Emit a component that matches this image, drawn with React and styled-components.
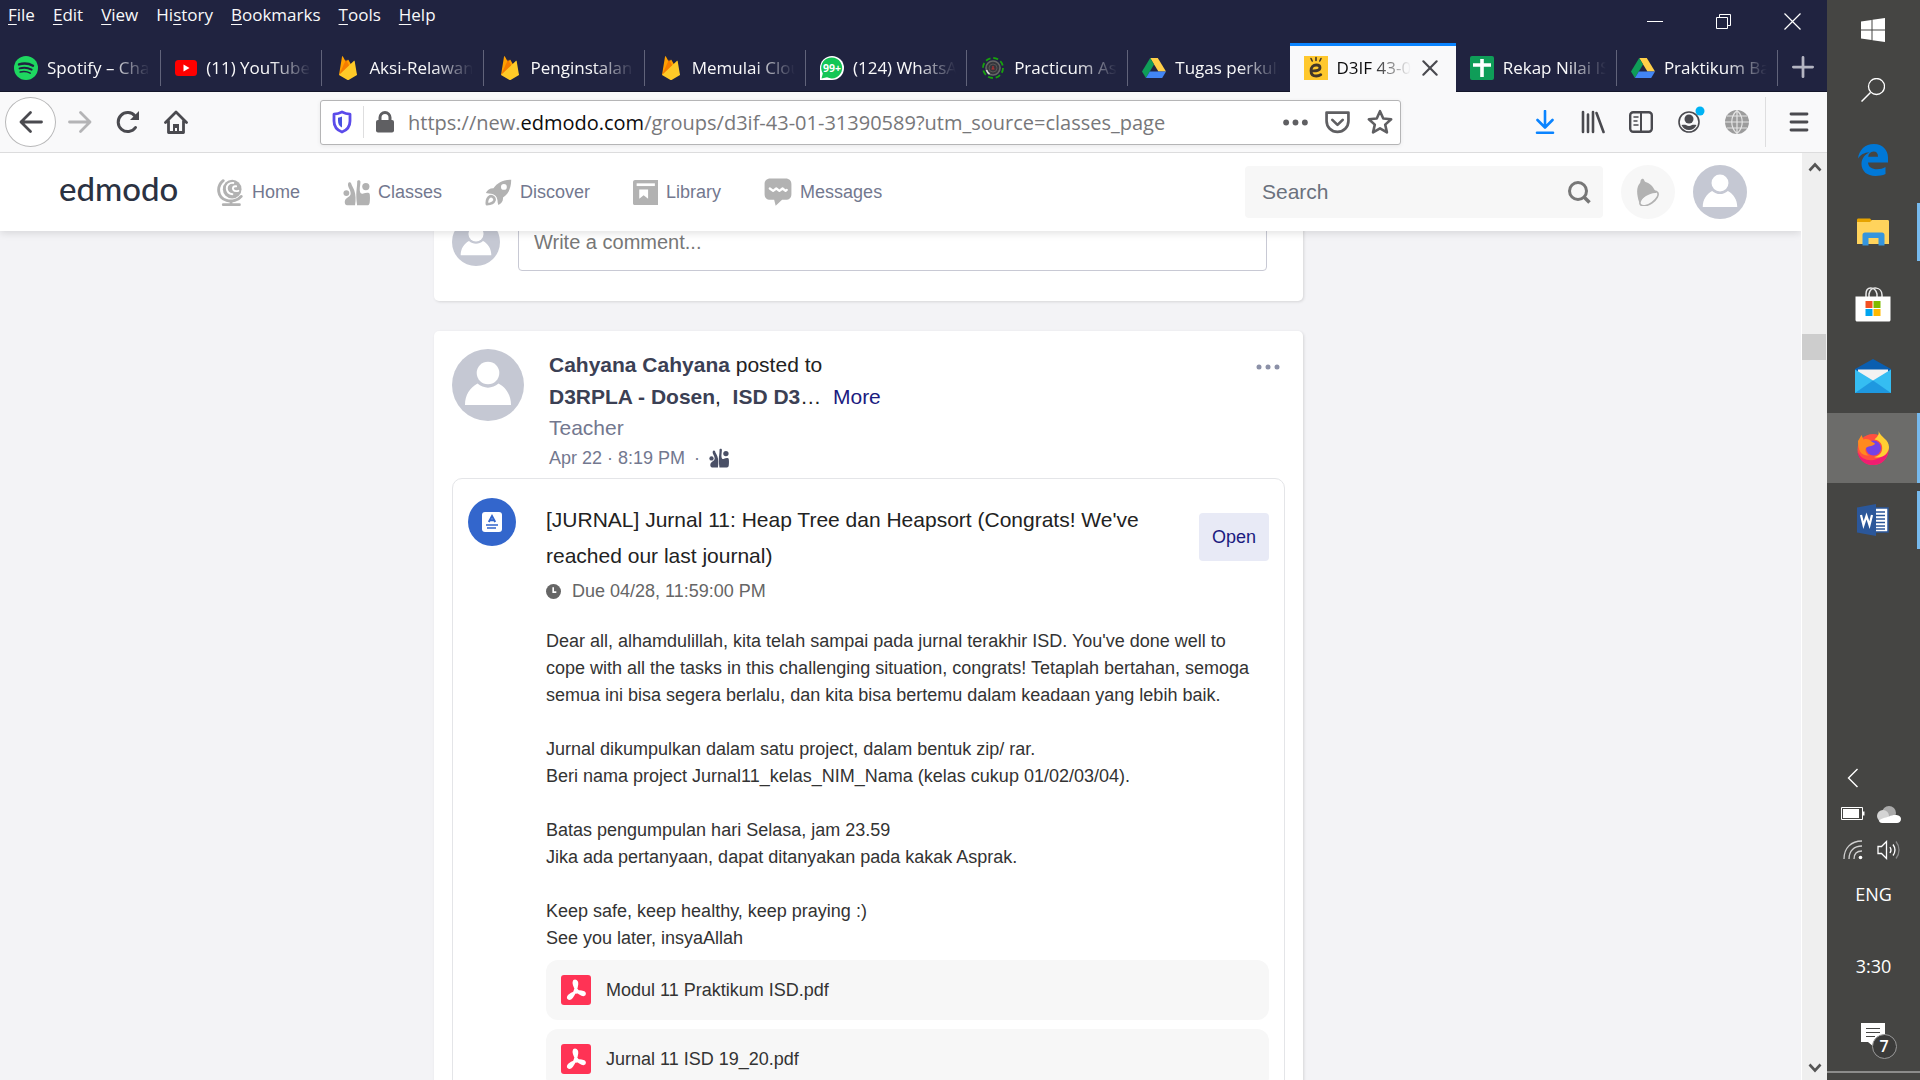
import React from "react";
import styled, { createGlobalStyle, css } from "styled-components";

const Global = createGlobalStyle`
  * { box-sizing: border-box; }
  html, body, #root { height: 100%; }
  body { margin: 0; overflow: hidden; background: #454543; font-family: "Liberation Sans", Arial, sans-serif; }
  button, input { font: inherit; color: inherit; }
  button { border: 0; padding: 0; background: none; cursor: pointer; }
  a { color: inherit; text-decoration: none; }
  p, h1, h2, h3, ul { margin: 0; padding: 0; }
  svg { display: block; flex: none; }
`;

const uiFont = css`font-family: "Open Sans", "Noto Sans", sans-serif;`;

const Desktop = styled.div`
  display: flex;
  height: 100vh;
`;
const Browser = styled.div`
  flex: 1;
  min-width: 0;
  display: flex;
  flex-direction: column;
  background: #f9f9fa;
`;

/* ---------- title bar and tabs ---------- */
const TitleBar = styled.header`
  ${uiFont}
  height: 92px;
  flex: none;
  display: flex;
  flex-direction: column;
  justify-content: space-between;
  background: #202340;
  color: #f9f9fa;
`;
const TitleRow = styled.div`
  display: flex;
  justify-content: space-between;
  height: 42px;
`;
const MenuBar = styled.nav`
  display: flex;
  align-items: flex-start;
  gap: 18px;
  padding: 3px 8px;
  font-size: 17px;
  line-height: 24px;
  u { text-underline-offset: 3px; }
`;
const WindowButtons = styled.div`
  display: flex;
`;
const WindowButton = styled.button`
  width: 69px;
  display: grid;
  place-items: center;
`;
const TabStrip = styled.div`
  display: flex;
  height: 49px;
  border-bottom: 1px solid #14162a;
`;
const Tab = styled.div`
  flex: 1;
  min-width: 0;
  height: 49px;
  display: flex;
  align-items: center;
  gap: 9px;
  padding: 0 ${(p) => (p.$active ? 16 : 11)}px 2px 14px;
  position: relative;
  background: ${(p) => (p.$active ? "#f9f9fa" : "transparent")};
  color: ${(p) => (p.$active ? "#0c0c0d" : "#f9f9fa")};
  border-top: 3px solid ${(p) => (p.$active ? "#0a84ff" : "transparent")};
  &::after {
    content: "";
    position: absolute;
    right: 0;
    top: 4px;
    height: 36px;
    width: 1px;
    background: ${(p) => (p.$line ? "#61637a" : "transparent")};
  }
`;
const TabTitle = styled.span`
  flex: 1;
  min-width: 0;
  overflow: hidden;
  white-space: nowrap;
  font-size: 17px;
  line-height: 26px;
  mask-image: linear-gradient(to left, transparent, #000 40px);
`;
const NewTab = styled.button`
  width: 49px;
  display: grid;
  place-items: center;
`;

/* ---------- toolbar ---------- */
const Toolbar = styled.div`
  height: 61px;
  flex: none;
  display: flex;
  align-items: center;
  justify-content: space-between;
  padding: 0 4px 0 5px;
  border-bottom: 1px solid #dcdcdd;
`;
const ToolGroup = styled.div`
  display: flex;
  align-items: center;
  color: #4a4a4f;
`;
const ToolButton = styled.button`
  width: 48px;
  height: 50px;
  display: grid;
  place-items: center;
`;
const BackButton = styled(ToolButton)`
  width: 51px;
  border: 1px solid #b8b8b9;
  border-radius: 50%;
  background: #fff;
`;
const UrlBar = styled.div`
  ${uiFont}
  flex: 1;
  margin: 0 120px;
  height: 45px;
  display: flex;
  align-items: center;
  gap: 11px;
  padding: 0 5px 0 11px;
  background: #fff;
  border: 1px solid #b5b5b6;
  border-radius: 3px;
  box-shadow: 0 1px 4px rgba(0, 0, 0, 0.07);
  font-size: 20px;
  color: #77777a;
`;
const UrlLine = styled.span`
  width: 1px;
  height: 32px;
  background: #dededf;
`;
const Url = styled.span`
  flex: 1;
  min-width: 0;
  overflow: hidden;
  white-space: nowrap;
  padding-left: 2px;
  b { font-weight: 400; color: #0c0c0d; }
`;
const UrlButton = styled.button`
  width: 31px;
  height: 32px;
  display: grid;
  place-items: center;
`;
const MenuDivider = styled.span`
  width: 1px;
  height: 50px;
  margin: 0 9px 0 4px;
  background: #dededf;
`;

/* ---------- edmodo page ---------- */
const Viewport = styled.div`
  flex: 1;
  min-height: 0;
  display: flex;
`;
const Page = styled.div`
  flex: 1;
  min-width: 0;
  display: flex;
  flex-direction: column;
  overflow: hidden;
  background: #f3f3f6;
  border-right: 1px solid #fff;
`;
const SiteHeader = styled.header`
  height: 78px;
  flex: none;
  z-index: 1;
  display: flex;
  align-items: center;
  padding: 0 54px 0 59px;
  background: #fff;
  box-shadow: 0 2px 8px rgba(0, 0, 0, 0.12);
`;
const Logo = styled.a`
  font-family: Lato, sans-serif;
  font-weight: 500;
  font-size: 33px;
  line-height: 40px;
  color: #2b3242;
  width: 118px;
  margin: 0 40px 8px 0;
`;
const SiteNav = styled.nav`
  flex: 1;
  display: flex;
  gap: 43px;
`;
const NavLink = styled.a`
  display: flex;
  align-items: center;
  gap: 8px;
  font-size: 18px;
  color: #73788f;
  svg { color: #b2b2b2; }
`;
const SearchBox = styled.label`
  width: 358px;
  height: 52px;
  display: flex;
  align-items: center;
  padding: 0 12px 0 17px;
  border-radius: 4px;
  background: #f7f7f7;
  input {
    flex: 1;
    min-width: 0;
    border: 0;
    padding: 0;
    background: none;
    font-size: 21px;
    color: #6b717d;
    outline: 0;
    &::placeholder { color: #6b717d; opacity: 1; }
  }
`;
const RoundButton = styled.button`
  width: 54px;
  height: 54px;
  margin-left: 18px;
  border-radius: 50%;
  display: grid;
  place-items: center;
  background: #f7f7f7;
`;

const Feed = styled.main`
  flex: 1;
  min-height: 0;
  display: grid;
  grid-template-columns: 434fr 869fr 498fr;
  overflow: hidden;
`;
const Column = styled.div`
  grid-column: 2;
  margin-top: -18px;
  display: flex;
  flex-direction: column;
  gap: 30px;
`;
const Card = styled.article`
  flex: none;
  padding: 18px 18px 30px;
  background: #fff;
  border-radius: 5px;
  box-shadow: 1px 1px 3px rgba(0, 0, 0, 0.12);
`;
const CommentCard = styled(Card)`
  display: flex;
  align-items: center;
  gap: 18px;
  padding: 0 36px 30px 18px;
`;
const CommentInput = styled.input`
  flex: 1;
  height: 58px;
  padding: 0 15px;
  border: 1px solid #c8c9d4;
  border-radius: 4px;
  font-size: 20px;
  outline: 0;
  &::placeholder { color: #777; opacity: 1; }
`;
const PostHead = styled.header`
  display: flex;
  gap: 25px;
  margin-bottom: 4px;
`;
const PostMeta = styled.div`
  flex: 1;
  font-size: 21px;
  color: #222;
  line-height: 32px;
  b { color: #3b4054; }
  a { color: #1b1b80; }
`;
const Role = styled.p`
  line-height: 29px;
  color: #73788f;
`;
const Stamp = styled.p`
  display: flex;
  align-items: center;
  gap: 9px;
  font-size: 18px;
  line-height: 32px;
  color: #73788f;
  svg { color: #4a5066; }
`;
const MoreButton = styled.button`
  align-self: flex-start;
  height: 36px;
  padding-right: 5px;
`;
const Assignment = styled.section`
  display: flex;
  align-items: flex-start;
  gap: 30px;
  padding: 19px 15px;
  border: 1px solid #e4e5e8;
  border-radius: 10px;
`;
const AssignmentIcon = styled.span`
  width: 48px;
  height: 48px;
  flex: none;
  border-radius: 50%;
  display: grid;
  place-items: center;
  background: #3366cc;
`;
const AssignmentBody = styled.div`
  flex: 1;
  min-width: 0;
`;
const AssignmentTop = styled.div`
  display: flex;
  gap: 36px;
  padding-top: 4px;
`;
const Title = styled.h2`
  flex: 1;
  font-size: 21px;
  font-weight: 400;
  line-height: 36px;
  color: #222;
`;
const OpenButton = styled.button`
  width: 70px;
  height: 48px;
  margin-top: 11px;
  border-radius: 4px;
  background: #e8eaf6;
  color: #1b1b80;
  font-size: 18px;
`;
const Due = styled.p`
  display: flex;
  align-items: center;
  gap: 11px;
  font-size: 18px;
  line-height: 34px;
  color: #666;
`;
const Text = styled.p`
  margin-top: 20px;
  font-size: 18px;
  line-height: 27px;
  color: #333;
  white-space: pre-line;
`;
const Files = styled.ul`
  list-style: none;
  margin-top: 8px;
  display: grid;
  gap: 9px;
`;
const FileLink = styled.a`
  height: 60px;
  display: flex;
  align-items: center;
  gap: 15px;
  padding: 0 15px;
  border-radius: 12px;
  background: #f7f7f7;
  font-size: 18px;
  color: #333;
`;
const Scrollbar = styled.div`
  width: 25px;
  padding: 8px 0 6px;
  display: flex;
  flex-direction: column;
  align-items: center;
  background: #efefef;
`;
const Thumb = styled.div`
  width: 24px;
  height: 26px;
  margin: 161px 1px auto 0;
  background: #cdcdcd;
`;

/* ---------- taskbar ---------- */
const Taskbar = styled.aside`
  ${uiFont}
  width: 93px;
  flex: none;
  display: flex;
  flex-direction: column;
  align-items: center;
  padding-bottom: 7px;
  background: #454543;
  color: #fff;
  font-size: 18px;
`;
const SmallTask = styled.button`
  width: 100%;
  height: 60px;
  padding-right: 2px;
  display: grid;
  place-items: center;
`;
const Apps = styled.div`
  width: 100%;
  margin-top: 5px;
  display: grid;
  gap: 2px;
`;
const AppButton = styled.button`
  height: 70px;
  padding-right: 2px;
  display: grid;
  place-items: center;
  position: relative;
  background: ${(p) => (p.$active ? "#6c6c6a" : "transparent")};
  &::after {
    content: "";
    position: absolute;
    right: 0;
    width: 3px;
    top: ${(p) => (p.$active ? 0 : 6)}px;
    bottom: ${(p) => (p.$active ? 0 : 6)}px;
    background: ${(p) => (p.$open ? "#76b9ed" : "transparent")};
  }
`;
const Tray = styled.div`
  width: 100%;
  margin-top: auto;
  padding-right: 6px;
  display: grid;
  grid-template-columns: 36px 36px;
  grid-auto-rows: 36px;
  justify-content: center;
  justify-items: center;
  align-items: center;
`;
const TrayText = styled.span`
  height: 72px;
  line-height: 52px;
`;
const NoticeButton = styled.button`
  position: relative;
  width: 24px;
  height: 24px;
  margin: 11px 2px 24px 0;
`;
const Badge = styled.span`
  position: absolute;
  left: 11px;
  top: 11px;
  width: 25px;
  height: 25px;
  border: 1px solid #999;
  border-radius: 50%;
  background: #3b3b3a;
  font-size: 16px;
  font-weight: 600;
  line-height: 23px;
  text-align: center;
`;
const Edge = styled.div`
  width: 100%;
  height: 2px;
  background: #8c8c8b;
`;

/* ---------- drawings ---------- */
const Icon = ({ s = 24, w, h, vb = "0 0 24 24", children, ...rest }) => (
  <svg width={w || s} height={h || s} viewBox={vb} fill="none" aria-hidden="true" {...rest}>{children}</svg>
);
const line = { stroke: "currentColor", strokeLinecap: "round", strokeLinejoin: "round" };

const Spotify = () => (
  <Icon>
    <circle cx="12" cy="12" r="12" fill="#1ed760" />
    <g stroke="#202340" strokeLinecap="round"><path d="M5 8.400c5-1.400 10-.9 14 1.300" strokeWidth="2.400" /><path d="M5.600 12.400c4-1.200 8.500-.7 12 1.200" strokeWidth="2" /><path d="M6.200 16c3.500-.9 7-.5 10 1.100" strokeWidth="1.600" /></g>
  </Icon>
);
const YouTube = () => (
  <Icon w={22} h={24} vb="0 0 22 24"><rect y="4" width="22" height="16" rx="3.500" fill="#f00" /><path d="M8.500 8.500v7l6-3.500z" fill="#fff" /></Icon>
);
const Firebase = () => (
  <Icon>
    <path d="M3 19 6 .8c.1-.5.7-.6.9-.2l3.300 6 1.300-2.500c.2-.4.800-.4 1 0L21 19z" fill="#ffa000" />
    <path d="m14 11-4-7.500L3 19z" fill="#f57c00" />
    <path d="m3 19 14.800-14c.3-.3.8-.1.9.3L21 19l-8 4.700c-.6.300-1.300.300-1.900 0z" fill="#ffca28" />
  </Icon>
);
const WhatsApp = () => (
  <Icon>
    <path d="M0 24V12A12 12 0 1 1 12 24z" fill="#fff" /><path d="m1.500 22.500 1.300-5A10.500 10.500 0 1 1 7 21.300z" fill="#14c656" />
    <text x="12" y="16" textAnchor="middle" fontSize="10.500" fontWeight="700" fill="#fff" fontFamily="Open Sans">99+</text>
  </Icon>
);
const Practicum = () => (
  <Icon><circle cx="12" cy="12" r="10" stroke="#17a30d" strokeWidth="1.800" strokeDasharray="5 2.850" /><circle cx="12" cy="12" r="7" stroke="#666" strokeWidth="1.600" fill="#35363c" /><circle cx="12" cy="12" r="4" stroke="#555" /><path d="M12 10v3m-1.500 0h3" stroke="#b33" strokeWidth="1.200" /><path d="M5.500 14c.6 1.800 1.500 3 3 4" stroke="#ddd" strokeWidth="1.600" /></Icon>
);
const Drive = () => (
  <Icon><path d="M8.200 2h7.600L24 15.500h-7.600z" fill="#ffcf48" /><path d="M8.200 2 0 15.500 3.900 22l8.100-13.500z" fill="#0f9d58" /><path d="M7.800 15.500H24L20.200 22H3.900z" fill="#4285f4" /></Icon>
);
const Edmodo = () => (
  <Icon><path fill="#ffc82d" d="M0 0h24v24H0z" /><g stroke="#42372a" strokeLinecap="round"><path d="M12 1.500v3M7 2.500l1.200 2.500M17 2.500 15.800 5" strokeWidth="1.600" /><path d="M8 14.800c4.500.3 8-.4 8-3 0-1.800-1.500-2.800-3.700-2.800-3 0-5.300 2.300-5.300 5.700 0 3.500 2 5.300 5.300 5.300 2 0 3.400-.5 4.500-1.300" strokeWidth="2.800" /></g></Icon>
);
const Sheets = () => (
  <Icon><rect width="24" height="24" rx="2" fill="#0f9d58" /><path d="M3 9h18M12 3v18" stroke="#fff" strokeWidth="3.600" /></Icon>
);

const Person = ({ s, ...rest }) => (
  <svg width={s} height={s} viewBox="0 0 72 72" aria-hidden="true" {...rest}>
    <circle cx="36" cy="36" r="36" fill="#c5c8d3" /><circle cx="36" cy="24" r="11.300" fill="#fff" /><path d="M13 56c0-10 5-17.500 12.500-21.500 6 5.500 15 5.500 21 0C54 38.500 59 46 59 56z" fill="#fff" />
  </svg>
);
const Classes = ({ s = 27 }) => (
  <Icon s={s} fill="currentColor">
    <circle cx="3" cy="12.500" r="2.600" /><circle cx="20.300" cy="6.700" r="3.200" />
    <path d="M4.500 4.200c-.7 2.800 2.500 5.300 2.300 8.800-.2 2.300-3 3.300-4.300 4.700-1 1-1.100 2.800-.7 4.300.3.800.8 1.300 1.700 1.300h7.200c.8-4.500.7-9.500-.7-13.300-1-2.700-2.300-4-2.700-6-.5-1.400-2.400-1.400-2.800.2z" />
    <path d="M12.500 23.300c-.6-5-.9-9-.5-13 .3-2.700.7-6 .6-8 .1-1.700 2.900-1.800 2.900.100 0 3-1.100 6-.3 9.200.4 1.500 1.500 1.800 2.800 1.300 2.200-.9 5.300-1.300 5.700.3.400 2.500.3 5.300 0 7.800-.200 1.500-1 2.300-2.300 2.300z" />
  </Icon>
);
const Globe = () => (
  <Icon s={27}>
    <path d="M5.500 1.500C-.5 6.500 0 16.500 8.500 19c4.800 1.400 10.500-.2 13-3.500" {...line} strokeWidth="2.600" />
    <circle cx="13.500" cy="9" r="8.300" fill="currentColor" />
    <path d="M14.500 3.500c-3.500-.5-6 2-5.800 5 .2 2.700 2 4.500 5 5M17 6.500c-2.500-.3-3.500 1.300-2.500 3 .8 1.300 2.500 1.500 4.500 1" stroke="#fff" strokeWidth="1.700" strokeLinecap="round" />
    <path d="M12.500 20v3M5.500 22.800h14.500" {...line} strokeWidth="2.400" />
  </Icon>
);
const Rocket = () => (
  <Icon s={27}>
    <path d="M23.300.7C15.500 1 11 3.500 7.500 8.300 4.500 8.200 2 9.700.8 12.500c1.700.5 3.300.7 4.700.7 3.300.6 5 2.300 5.600 5.600 0 1.500.3 3 .8 4.400 2.800-1.500 4.300-3.700 4.100-6.700C20.500 13.300 23.300 8.500 23.300.7z" fill="currentColor" />
    <circle cx="16.800" cy="7" r="2.600" fill="#fff" />
    <path d="M1.700 22.300c-.3-3.300.5-5.800 3-7 2-.5 4.300 1.700 3.700 3.700-.8 2.300-3.500 3.300-6.700 3.300z" {...line} strokeWidth="2.400" />
  </Icon>
);
const Library = () => (
  <Icon s={25}><path d="M2 0h22v24H1.500C.7 24 0 23.300 0 22.500V2C0 .9.9 0 2 0z" fill="currentColor" /><path d="M3.500 4.500h17.500" stroke="#fff" strokeWidth="2.600" /><path d="M6 9h8.500v9l-4.300-3.300L6 18z" fill="#fff" /></Icon>
);
const Messages = () => (
  <Icon s={28}><path d="M5.500.5h13c3.300 0 5 2 5 4.800v8.400c0 3-1.700 5-5 5h-3L10 23.700l-1.300-5H5.500c-3.300 0-5-2-5-5V5.300c0-2.800 1.700-4.800 5-4.800z" fill="currentColor" /><path d="m5 9 2.800 2 2.700-2 2.700 2 2.700-2 2.600 2 1-.8" {...line} stroke="#fff" strokeWidth="2" /></Icon>
);
const Bell = () => (
  <Icon w={24} h={28} vb="0 0 24 28">
    <ellipse cx="13" cy="20.500" rx="10.500" ry="5.200" transform="rotate(-35 13 20.500)" fill="#f7f7f7" stroke="#b2b2b2" strokeWidth="1.600" />
    <path d="M3.300 24.500C.7 17 0 9 4 5c.6-1.300.3-2.600 1.200-3.600C6.300.3 8 1 8.300 2.500c.2.900.8 1.400 2 1.800C15.500 5.900 17.500 10 20.500 15c-3.500-.5-7.500 1-10.500 3s-5 4-6.700 6.500z" fill="#b2b2b2" />
  </Icon>
);
const Pdf = () => (
  <Icon s={30} vb="0 0 30 30"><rect width="30" height="30" rx="3" fill="#ff3355" /><path d="M14 6c3 0 2 5 0 10-1.600 4-4 8-6 7.500-2.300-1 1-4.500 6-6 4.500-1.300 9.500-.8 9.500 1.200 0 2.300-4.500.8-7-2.500-2.600-3.400-5-10.200-2.500-10.200z" stroke="#fff" strokeWidth="2.800" /></Icon>
);

const tabs = [
  ["Spotify – Chart", Spotify], ["(11) YouTube", YouTube], ["Aksi-Relawan", Firebase], ["Penginstalan", Firebase],
  ["Memulai Cloud", Firebase], ["(124) WhatsApp", WhatsApp], ["Practicum Ass", Practicum], ["Tugas perkuliah", Drive],
  ["D3IF 43-01", Edmodo], ["Rekap Nilai ISD", Sheets], ["Praktikum Bas", Drive],
];
const nav = [["Home", Globe], ["Classes", Classes], ["Discover", Rocket], ["Library", Library], ["Messages", Messages]];
const menus = [["", "F", "ile"], ["", "E", "dit"], ["", "V", "iew"], ["Hi", "s", "tory"], ["", "B", "ookmarks"], ["", "T", "ools"], ["", "H", "elp"]];
const message = `Dear all, alhamdulillah, kita telah sampai pada jurnal terakhir ISD. You've done well to cope with all the tasks in this challenging situation, congrats! Tetaplah bertahan, semoga semua ini bisa segera berlalu, dan kita bisa bertemu dalam keadaan yang lebih baik.

Jurnal dikumpulkan dalam satu project, dalam bentuk zip/ rar.
Beri nama project Jurnal11_kelas_NIM_Nama (kelas cukup 01/02/03/04).

Batas pengumpulan hari Selasa, jam 23.59
Jika ada pertanyaan, dapat ditanyakan pada kakak Asprak.

Keep safe, keep healthy, keep praying :)
See you later, insyaAllah`;

function Chrome() {
  return (
    <>
      <TitleBar>
        <TitleRow>
          <MenuBar>{menus.map(([a, b, c]) => <a href="#menu" key={b + c}>{a}<u>{b}</u>{c}</a>)}</MenuBar>
          <WindowButtons>
            <WindowButton aria-label="Minimize"><Icon s={16} vb="0 0 16 16"><path d="M0 8.500h16" stroke="#fff" /></Icon></WindowButton>
            <WindowButton aria-label="Restore"><Icon s={15} vb="0 0 15 15"><path d="M.5 3.500h11v11H.5zM3.500 3.500v-3h11v11h-3" stroke="#fff" /></Icon></WindowButton>
            <WindowButton aria-label="Close"><Icon s={17} vb="0 0 17 17"><path d="m.5.5 16 16m0-16-16 16" stroke="#fff" strokeWidth="1.200" /></Icon></WindowButton>
          </WindowButtons>
        </TitleRow>
        <TabStrip>
          {tabs.map(([t, I], i) => (
            <Tab key={t} $active={i === 8} $line={i !== 7 && i !== 8}>
              <I /><TabTitle>{t}</TabTitle>
              {i === 8 && <button aria-label="Close tab"><Icon s={20}><path d="m4 4 16 16m0-16L4 20" stroke="#4a4a4f" strokeWidth="2.600" strokeLinecap="round" /></Icon></button>}
            </Tab>
          ))}
          <NewTab aria-label="New tab"><Icon s={22}><path d="M12 1.500v21M1.500 12h21" stroke="#b4b5c2" strokeWidth="3" strokeLinecap="round" /></Icon></NewTab>
        </TabStrip>
      </TitleBar>
      <Toolbar>
        <ToolGroup>
          <BackButton aria-label="Back"><Icon><path d="M22.500 12H2m9.500-9.500L2 12l9.500 9.500" {...line} strokeWidth="2.800" /></Icon></BackButton>
          <ToolButton aria-label="Forward"><Icon color="#b4b4b6"><path d="M1.500 12H22m-9.500-9.500L22 12l-9.500 9.500" {...line} strokeWidth="2.800" /></Icon></ToolButton>
          <ToolButton aria-label="Reload"><Icon><path d="M19.500 17.500A9.500 9.500 0 1 1 19 6" {...line} strokeWidth="3" /><path d="M23 1v9h-9z" fill="currentColor" /></Icon></ToolButton>
          <ToolButton aria-label="Home"><Icon><path d="M1.500 12.500 12 2l10.500 10.500M4.500 11v11.500h15V11" {...line} strokeWidth="2.800" /><path d="M9 22v-8h6v8h-2v-4h-2v4z" fill="currentColor" /></Icon></ToolButton>
        </ToolGroup>
        <UrlBar>
          <Icon w={20} h={24} vb="0 0 20 24"><path d="M10 2c3 1.500 5.500 2 8 2.200V11c0 5.500-2.500 9-8 11-5.500-2-8-5.500-8-11V4.200C4.500 4 7 3.500 10 2z" stroke="#5b4bea" strokeWidth="2.800" strokeLinejoin="round" /><path d="M10 6.500v11c-3-1.500-4-3.500-4-7V7.700c1.500-.2 3-.6 4-1.200z" fill="#4751e0" /></Icon>
          <UrlLine />
          <Icon w={20} h={24} vb="0 0 20 24"><rect x="1" y="10" width="18" height="12.500" rx="2" fill="#5f5f62" /><path d="M5 11V7.500a5 5 0 0 1 10 0V11" stroke="#5f5f62" strokeWidth="3" /></Icon>
          <Url>https://new.<b>edmodo.com</b>/groups/d3if-43-01-31390589?utm_source=classes_page</Url>
          <UrlButton aria-label="Page actions"><Icon s={25} fill="#5f5f62"><circle cx="3" cy="12" r="2.800" /><circle cx="12" cy="12" r="2.800" /><circle cx="21" cy="12" r="2.800" /></Icon></UrlButton>
          <UrlButton aria-label="Save to Pocket"><Icon s={25}><path d="M1.500 2.500h21v8a10.500 10.500 0 0 1-21 0zM7 9.500l5 4.800 5-4.800" stroke="#5f5f62" strokeWidth="2.600" strokeLinecap="round" strokeLinejoin="round" /></Icon></UrlButton>
          <UrlButton aria-label="Bookmark"><Icon s={26}><path d="m12 2 3 6.700 7.300.8-5.500 4.900 1.600 7.200L12 17.900l-6.400 3.700 1.600-7.200-5.500-4.900L9 8.700z" stroke="#5f5f62" strokeWidth="2.400" strokeLinejoin="round" /></Icon></UrlButton>
        </UrlBar>
        <ToolGroup>
          <ToolButton aria-label="Downloads"><Icon color="#0a84ff"><path d="M12 1v16m-7.500-7L12 17.500 19.500 10M4 22.700h16" {...line} strokeWidth="2.600" /></Icon></ToolButton>
          <ToolButton aria-label="Library"><Icon><path d="M2 2v20M7 4.500V22M12 2v20M15.500 3l7 19" {...line} strokeWidth="2.600" /></Icon></ToolButton>
          <ToolButton aria-label="Sidebar"><Icon><rect x="1.200" y="2.200" width="21.600" height="19.600" rx="3" {...line} strokeWidth="2.400" /><path d="M12 2v20" {...line} strokeWidth="2" /><path d="M5 7h4M5 11h3M5 15h4" {...line} strokeWidth="1.500" /></Icon></ToolButton>
          <ToolButton aria-label="Account"><Icon w={32} h={34} vb="0 0 32 34"><circle cx="16" cy="17" r="10" {...line} strokeWidth="1.600" /><circle cx="16" cy="14" r="4.500" fill="currentColor" /><path d="M8.500 20c2-.5 3.500-.5 4.500 0 2 1.200 4 1.200 6 0 1-.5 2.500-.5 4.500 0-1.500 3.300-4 5-7.500 5s-6-1.700-7.500-5z" fill="currentColor" /><circle cx="27" cy="6" r="4.500" fill="#00b3f4" /></Icon></ToolButton>
          <ToolButton aria-label="Extension"><Icon><circle cx="12" cy="12" r="12" fill="#9c9c9c" /><path d="M12 0v24M0 12h24M2 6h20M2 18h20M12 .5c-7 6-7 17 0 23 7-6 7-17 0-23z" stroke="#e4e4e4" strokeWidth="1.200" /></Icon></ToolButton>
          <MenuDivider />
          <ToolButton aria-label="Open menu"><Icon><path d="M4 4h16M4 12h16M4 20h16" {...line} strokeWidth="2.800" /></Icon></ToolButton>
        </ToolGroup>
      </Toolbar>
    </>
  );
}

function Post() {
  return (
    <Card>
      <PostHead>
        <Person s={72} />
        <PostMeta>
          <p><b>Cahyana Cahyana</b> posted to</p>
          <p><b>D3RPLA - Dosen</b>,&nbsp; <b>ISD D3</b>…&nbsp; <a href="#more">More</a></p>
          <Role>Teacher</Role>
          <Stamp>Apr 22 · 8:19 PM <span>·</span><Classes s={20} /></Stamp>
        </PostMeta>
        <MoreButton aria-label="Post options"><Icon w={24} h={8} vb="0 0 24 8" fill="#8b90a7"><circle cx="3" cy="4" r="2.500" /><circle cx="12" cy="4" r="2.500" /><circle cx="21" cy="4" r="2.500" /></Icon></MoreButton>
      </PostHead>
      <Assignment>
        <AssignmentIcon><Icon w={20} h={20} vb="0 0 20 20"><rect width="20" height="20" rx="3" fill="#fff" /><path d="m6.800 10 3.200-6 3.200 6M8 8.300h4" stroke="#3366cc" strokeWidth="2" /><path d="M4 13h12M5 16h9" stroke="#3366cc" strokeWidth="1.300" /></Icon></AssignmentIcon>
        <AssignmentBody>
          <AssignmentTop>
            <Title>[JURNAL] Jurnal 11: Heap Tree dan Heapsort (Congrats! We've reached our last journal)</Title>
            <OpenButton>Open</OpenButton>
          </AssignmentTop>
          <Due><Icon s={15}><circle cx="12" cy="12" r="12" fill="#666" /><path d="M11.500 5v8h5" stroke="#fff" strokeWidth="2.600" /></Icon>Due 04/28, 11:59:00 PM</Due>
          <Text>{message}</Text>
          <Files>
            {["Modul 11 Praktikum ISD.pdf", "Jurnal 11 ISD 19_20.pdf"].map((f) => (
              <li key={f}><FileLink href="#file"><Pdf />{f}</FileLink></li>
            ))}
          </Files>
        </AssignmentBody>
      </Assignment>
    </Card>
  );
}

function EdmodoPage() {
  return (
    <Viewport>
      <Page>
        <SiteHeader>
          <Logo href="#home">edmodo</Logo>
          <SiteNav>{nav.map(([t, I]) => <NavLink href="#nav" key={t}><I />{t}</NavLink>)}</SiteNav>
          <SearchBox>
            <input aria-label="Search" placeholder="Search" />
            <Icon s={24}><circle cx="11" cy="11" r="8.500" stroke="#777" strokeWidth="3" /><path d="m17 17 5.500 5.500" stroke="#777" strokeWidth="3.600" /></Icon>
          </SearchBox>
          <RoundButton aria-label="Notifications"><Bell /></RoundButton>
          <RoundButton aria-label="Profile"><Person s={54} /></RoundButton>
        </SiteHeader>
        <Feed>
          <Column>
            <CommentCard>
              <Person s={48} />
              <CommentInput aria-label="Write a comment" placeholder="Write a comment..." />
            </CommentCard>
            <Post />
          </Column>
        </Feed>
      </Page>
      <Scrollbar>
        <Icon w={14} h={12} vb="0 0 14 12"><path d="m1.500 9.500 5.500-6 5.500 6" stroke="#555" strokeWidth="2.600" /></Icon>
        <Thumb />
        <Icon w={14} h={12} vb="0 0 14 12"><path d="m1.500 2.500 5.500 6 5.500-6" stroke="#555" strokeWidth="2.600" /></Icon>
      </Scrollbar>
    </Viewport>
  );
}

function TaskbarPanel() {
  return (
    <Taskbar>
      <SmallTask aria-label="Start"><Icon><path d="m0 3.500 10.500-1.500v9.500H0zM11.500 1.800 24 0v11.500H11.500zM0 12.500h10.500V22L0 20.500zM11.500 12.500H24V24l-12.500-1.800z" fill="#fff" /></Icon></SmallTask>
      <SmallTask aria-label="Search"><Icon><circle cx="15.500" cy="8.500" r="8" stroke="#fff" strokeWidth="1.300" /><path d="M9.500 14.500.5 23.500" stroke="#fff" strokeWidth="1.500" /></Icon></SmallTask>
      <Apps>
        <AppButton aria-label="Edge"><Icon s={32} vb="0 0 32 32"><path d="M1 14.500C2 6 8 0 17 0c8.500 0 14 6 14 13.500v5H11c.3 4.500 4 6.800 9 6.800 3.300 0 6-.8 8.500-2.200v7C25.500 31.500 22 32 18.500 32 10 32 4.500 27 4.500 20c0-5.500 3.500-9.500 8-11.700C7 8.500 3.500 11 1 14.500zM11.200 12.700h9.800c0-3.300-1.500-5.200-4.500-5.200S11.700 9.700 11.200 12.700z" fill="#0078d7" /></Icon></AppButton>
        <AppButton aria-label="Files" $open><Icon w={34} h={28} vb="0 0 34 28"><path d="M1 2c0-1 .5-1.500 1.500-1.500H14L17 4H1z" fill="#e6a300" /><path d="M1 4h13l2-2h15.500c1 0 1.500.500 1.500 1.500V26H1z" fill="#ffd35c" /><path d="M6.500 27.500V17c0-1.500 1-2.500 2.500-2.500h17c1.500 0 2.500 1 2.500 2.500v10.500h-6V20h-10v7.500z" fill="#3595de" /></Icon></AppButton>
        <AppButton aria-label="Store"><Icon w={36} h={36} vb="0 0 36 36"><path d="M11 11V8c0-8 9-8 11 0v3M14 11V8c2-9 13-7 13 1v2" stroke="#e9e9e9" strokeWidth="1.500" /><path d="M.5 10.500h35V34c0 .8-.7 1.500-1.500 1.500H2c-.8 0-1.500-.7-1.500-1.500z" fill="#fff" /><path d="M10.500 15h7v7h-7z" fill="#f25022" /><path d="M18.500 15h7v7h-7z" fill="#7fba00" /><path d="M10.500 23h7v7h-7z" fill="#00a4ef" /><path d="M18.500 23h7v7h-7z" fill="#ffb900" /></Icon></AppButton>
        <AppButton aria-label="Mail"><Icon w={36} h={34} vb="0 0 36 34"><path d="M0 10 18 0l18 10v6H0z" fill="#0a5eb0" /><path d="M3 10.500h30v12H3z" fill="#f2f2f2" /><path d="m0 10.500 18 11 18-11V34H0z" fill="#35bdf2" /><path d="m0 34 18-12.500L36 34z" fill="#1689d8" opacity=".7" /></Icon></AppButton>
        <AppButton aria-label="Firefox" $active $open><Icon s={34} vb="0 0 34 34"><circle cx="17" cy="18.500" r="15.500" fill="#ff4f3f" /><path d="M17 34C8 34 2 28 1.500 20c3 8 10 10 16 9 8-1.500 11-7 11.500-11l3.500 1c-.5 9-7 15-15.500 15z" fill="#ef1d72" /><path d="M22.500 0c1 4-1.500 6-4 8.500 6 1 8.500 5.500 7.500 10.500-.8 4-4 6.500-8 7 9 2.500 15-4 15-10C33 8.500 25 6.500 22.500 0z" fill="#ffcf32" /><circle cx="17.500" cy="17" r="7.500" fill="#7542e5" /><path d="M2 10 5.500 4l2 4.500c3-.8 5.500-.5 8 2l3.500 2c-1 3-6 2-8.500 4-2 2-1 6 2.500 8C5 25 2 20 2 10z" fill="#ff8a1f" /></Icon></AppButton>
        <AppButton aria-label="Word" $open><Icon w={32} h={32} vb="0 0 32 32"><path d="M18 4h13v24H18z" fill="#fff" stroke="#2b579a" strokeWidth="1.500" /><path d="M19 8h9M19 11.500h9M19 15h9M19 18.500h9M19 22h9M19 25h9" stroke="#2b579a" strokeWidth="1.500" /><path d="M0 3.500 19 0v32L0 28.500z" fill="#2b579a" /><path d="m4 11 2.500 10 3-9 3 9L15 11" stroke="#fff" strokeWidth="2.200" /></Icon></AppButton>
      </Apps>
      <Tray>
        <Icon w={12} h={20} vb="0 0 12 20"><path d="m10.500 1-9 9 9 9" stroke="#fff" strokeWidth="1.400" /></Icon><span />
        <Icon w={24} h={14} vb="0 0 24 14"><path d="M.5.5h21v12H.5z" stroke="#fff" /><path d="M2 2h16v9H2zM22 4.500h1.500v4H22z" fill="#fff" /></Icon>
        <Icon w={24} h={17} vb="0 0 24 17"><circle cx="12" cy="7" r="7" fill="#aaa" /><circle cx="6" cy="10" r="6" fill="#d4d4d4" /><path d="M2 15c2-3 6-3 10-4.500 5-2.500 12-2 12 2.500 0 2.500-2 4-4 4H5c-1.500 0-2.500-.7-3-2z" fill="#fff" /></Icon>
        <Icon s={20} vb="0 0 20 20"><path d="M1 19C1 8 8 1 19 1M6 19c0-8 5-13 13-13M11 19c0-5 3-8 8-8" stroke="#d0d0d0" strokeWidth="1.300" /><circle cx="17.500" cy="17.500" r="1.800" fill="#fff" /></Icon>
        <Icon w={24} h={20} vb="0 0 24 20"><path d="M1 6.500h3.500L9.500 1.500v17l-5-5H1z" stroke="#fff" strokeWidth="1.300" /><path d="M13 7c1.300 2 1.300 4 0 6M16 4.500c2.500 3.500 2.500 7.500 0 11" stroke="#fff" strokeWidth="1.300" /><path d="M19 1.500c4 5 4 12 0 17" stroke="#888" strokeWidth="1.300" /></Icon>
      </Tray>
      <TrayText>ENG</TrayText>
      <TrayText>3:30</TrayText>
      <NoticeButton aria-label="Notifications, 7 new">
        <Icon><path d="M0 0h24v19H13v5l-6-5H0z" fill="#fff" /><path d="M5 5.500h14M5 9.500h14M5 13.500h9" stroke="#454543" /></Icon>
        <Badge>7</Badge>
      </NoticeButton>
      <Edge />
    </Taskbar>
  );
}

export default function App() {
  return (
    <>
      <Global />
      <Desktop>
        <Browser>
          <Chrome />
          <EdmodoPage />
        </Browser>
        <TaskbarPanel />
      </Desktop>
    </>
  );
}
